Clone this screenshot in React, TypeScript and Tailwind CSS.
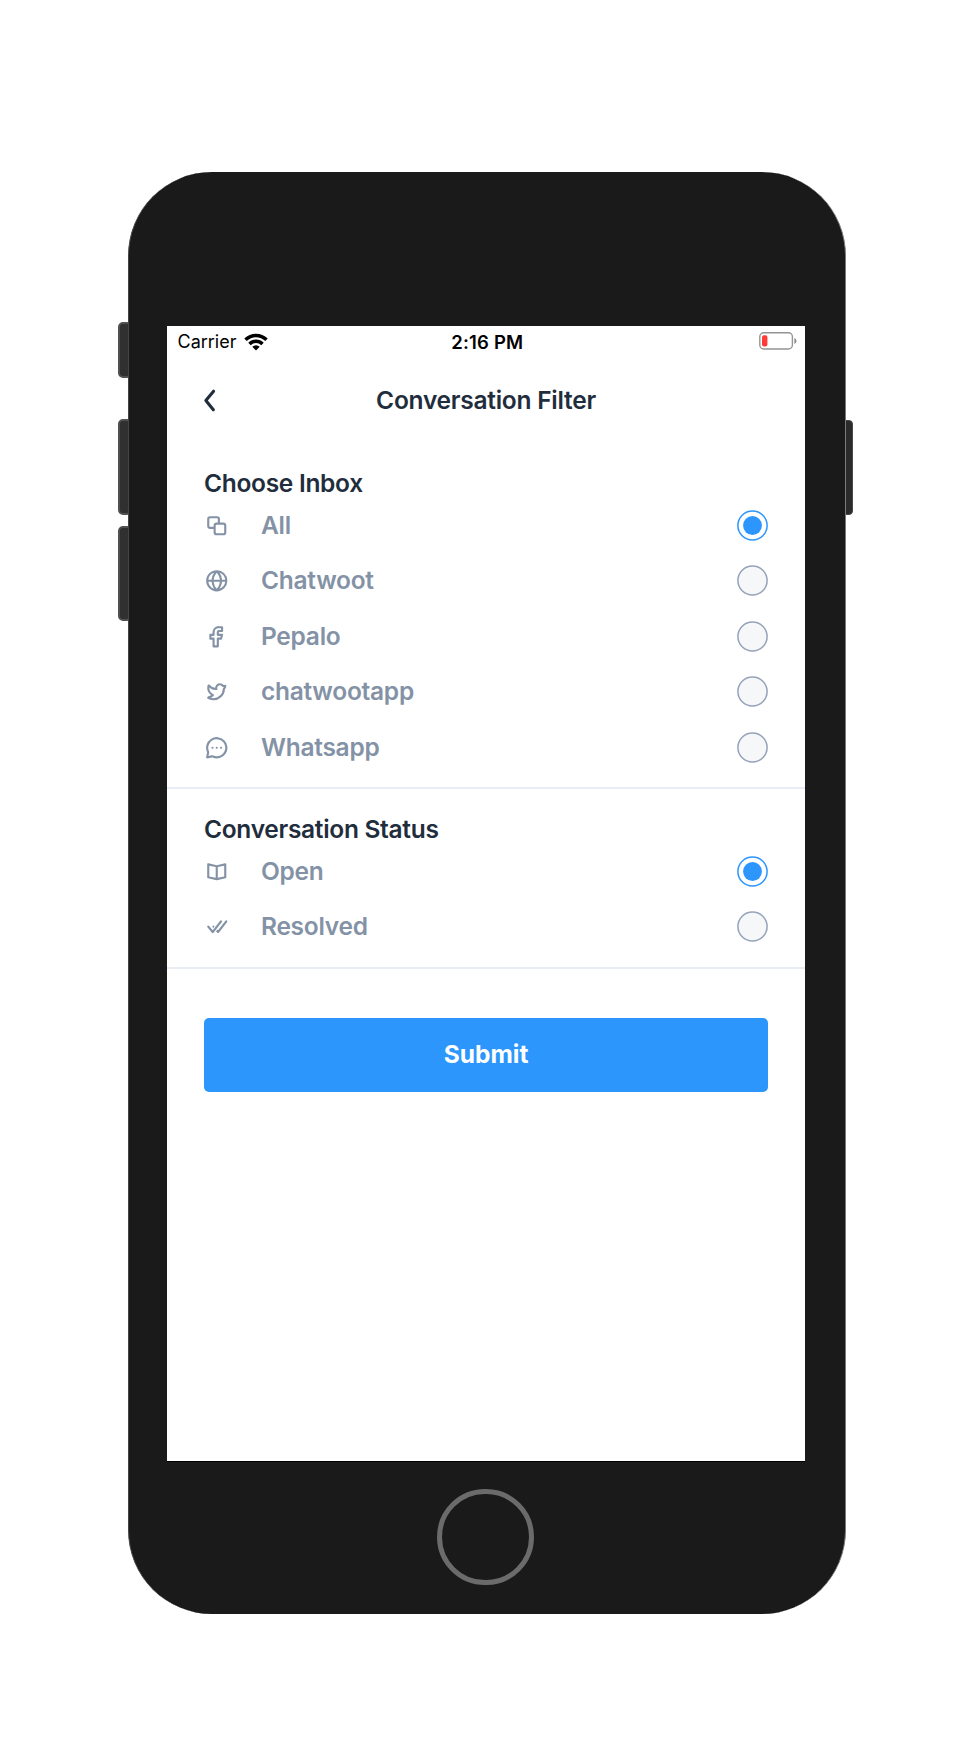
import type { ReactNode } from 'react';

const ICONS: Record<string, ReactNode> = {
  copy: (
    <>
      <path d="M18 21h-6a3 3 0 0 1-3-3v-6a3 3 0 0 1 3-3h6a3 3 0 0 1 3 3v6a3 3 0 0 1-3 3zm-6-10a1 1 0 0 0-1 1v6a1 1 0 0 0 1 1h6a1 1 0 0 0 1-1v-6a1 1 0 0 0-1-1z" />
      <path d="M9.73 15H5.67A2.68 2.68 0 0 1 3 12.33V5.67A2.68 2.68 0 0 1 5.67 3h6.66A2.68 2.68 0 0 1 15 5.67V9.4h-2V5.67a.67.67 0 0 0-.67-.67H5.67a.67.67 0 0 0-.67.67v6.66a.67.67 0 0 0 .67.67h4.06z" />
    </>
  ),
  globe: (
    <path d="M22 12A10 10 0 0 0 12 2a10 10 0 0 0 0 20 10 10 0 0 0 10-10zm-2.07-1H17a12.91 12.91 0 0 0-2.33-6.54A8 8 0 0 1 19.93 11zM9.08 13H15a11.44 11.44 0 0 1-3 6.61A11 11 0 0 1 9.08 13zm0-2A11.4 11.4 0 0 1 12 4.4a11.19 11.19 0 0 1 3 6.6zm.36-6.57A13.18 13.18 0 0 0 7.07 11h-3a8 8 0 0 1 5.37-6.57zM4.09 13h3a12.86 12.86 0 0 0 2.35 6.56A8 8 0 0 1 4.09 13zm10.55 6.55A13.14 13.14 0 0 0 17 13h2.95a8 8 0 0 1-5.31 6.55z" />
  ),
  facebook: (
    <path d="M13 22H9a1 1 0 0 1-1-1v-6.2H6a1 1 0 0 1-1-1v-3.6a1 1 0 0 1 1-1h2V7.5A5.77 5.77 0 0 1 14 2h3a1 1 0 0 1 1 1v3.6a1 1 0 0 1-1 1h-3v1.6h3a1 1 0 0 1 .8.39 1 1 0 0 1 .16.88l-1 3.6a1 1 0 0 1-1 .73H14V21a1 1 0 0 1-1 1zm-3-2h2v-6.2a1 1 0 0 1 1-1h2.24l.44-1.6H13a1 1 0 0 1-1-1V7.5a2 2 0 0 1 2-1.9h2V4h-2a3.78 3.78 0 0 0-4 3.5v2.7a1 1 0 0 1-1 1H7v1.6h2a1 1 0 0 1 1 1z" />
  ),
  twitter: (
    <path d="M8.51 20h-.08a10.87 10.87 0 0 1-4.65-1.09A1.38 1.38 0 0 1 3 17.47a1.41 1.41 0 0 1 1.16-1.18 6.63 6.63 0 0 0 2.54-.89 9.49 9.49 0 0 1-3.51-9.07 1.41 1.41 0 0 1 1-1.15 1.35 1.35 0 0 1 1.43.41 7.09 7.09 0 0 0 4.88 2.75 4.5 4.5 0 0 1 1.41-3.1 4.47 4.47 0 0 1 6.37.19.7.7 0 0 0 .78.1A1.39 1.39 0 0 1 21 7.13a6.66 6.66 0 0 1-1.28 2.6A10.79 10.79 0 0 1 8.51 20zm0-2h.08a8.79 8.79 0 0 0 9.09-8.59 1.32 1.32 0 0 1 .37-.85 5.19 5.19 0 0 0 .62-1 2.56 2.56 0 0 1-1.91-.85A2.45 2.45 0 0 0 15 6a2.5 2.5 0 0 0-1.79.69 2.53 2.53 0 0 0-.72 2.42l.26 1.14-1.17.08a8.3 8.3 0 0 1-6.54-2.4 7.12 7.12 0 0 0 3.73 6.46l.95.54-.63.9a5.62 5.62 0 0 1-2.68 1.92A8.34 8.34 0 0 0 8.5 18z" />
  ),
  message: (
    <>
      <circle cx="12" cy="12" r="1" />
      <circle cx="16" cy="12" r="1" />
      <circle cx="8" cy="12" r="1" />
      <path d="M19.07 4.93a10 10 0 0 0-16.28 11 1.06 1.06 0 0 1 .09.64L2 20.8a1 1 0 0 0 .27.91A1 1 0 0 0 3 22h.2l4.28-.86a1.26 1.26 0 0 1 .64.09 10 10 0 0 0 11-16.28zm.83 8.36a8 8 0 0 1-11 6.08 3.26 3.26 0 0 0-1.25-.26 3.43 3.43 0 0 0-.56.05l-2.82.57.57-2.82a3.09 3.09 0 0 0-.21-1.81 8 8 0 0 1 6.08-11 8 8 0 0 1 9.19 9.19z" />
    </>
  ),
  book: (
    <path d="M20.62 4.22a1 1 0 0 0-.84-.2L12 5.77 4.22 4A1 1 0 0 0 3 5v12.2a1 1 0 0 0 .78 1l8 1.8h.44l8-1.8a1 1 0 0 0 .78-1V5a1 1 0 0 0-.38-.78zM5 6.25l6 1.35v10.15L5 16.4zM19 16.4l-6 1.35V7.6l6-1.35z" />
  ),
  doneAll: (
    <>
      <path d="M16.62 6.21a1 1 0 0 0-1.41.17l-7 9-3.43-4.18a1 1 0 1 0-1.56 1.25l4.17 5.18a1 1 0 0 0 .78.37 1 1 0 0 0 .83-.38l7.83-10a1 1 0 0 0-.21-1.41z" />
      <path d="M21.62 6.21a1 1 0 0 0-1.41.17l-7 9-.61-.75-1.26 1.62 1.1 1.37a1 1 0 0 0 .78.37 1 1 0 0 0 .78-.38l7.83-10a1 1 0 0 0-.21-1.4z" />
      <path d="M8.71 13.06L10 11.44l-.2-.24a1 1 0 0 0-1.43-.2 1 1 0 0 0-.15 1.41z" />
    </>
  ),
};

function Radio({ checked }: { checked?: boolean }) {
  return (
    <svg viewBox="0 0 31 31" className="size-[31px] shrink-0" strokeWidth="1.5">
      {checked ? (
        <>
          <circle cx="15.5" cy="15.5" r="14.6" fill="#fff" stroke="#2c96fd" />
          <circle cx="15.5" cy="15.5" r="9.4" fill="#2c96fd" />
        </>
      ) : (
        <circle cx="15.5" cy="15.5" r="14.6" fill="#f5f7f9" stroke="#95a3bb" />
      )}
    </svg>
  );
}

type Item = { icon: string; label: string; checked?: boolean };

function Section({ title, items }: { title: string; items: Item[] }) {
  return (
    <section className="border-b-2 border-[#e8ecf5] px-[37px]">
      <h2 className="h-[29px] text-[24.5px] leading-[29px] font-semibold tracking-[-0.3px] text-[#1f2d3d]">{title}</h2>
      <ul className="pb-[12px]">
        {items.map((item) => (
          <li key={item.label} className="flex h-[55.5px] items-center">
            <svg viewBox="0 0 24 24" className="size-[25.5px] shrink-0 fill-[#8492a6]">
              {ICONS[item.icon]}
            </svg>
            <span className="ml-[31.5px] flex-1 text-[24.5px] leading-[29px] font-semibold tracking-[-0.27px] text-[#8492a6]">
              {item.label}
            </span>
            <Radio checked={item.checked} />
          </li>
        ))}
      </ul>
    </section>
  );
}

const INBOXES: Item[] = [
  { icon: 'copy', label: 'All', checked: true },
  { icon: 'globe', label: 'Chatwoot' },
  { icon: 'facebook', label: 'Pepalo' },
  { icon: 'twitter', label: 'chatwootapp' },
  { icon: 'message', label: 'Whatsapp' },
];

const STATUSES: Item[] = [
  { icon: 'book', label: 'Open', checked: true },
  { icon: 'doneAll', label: 'Resolved' },
];

function StatusBar() {
  return (
    <div className="grid h-[31px] grid-cols-3 items-center pr-[8px] pl-[10.5px] text-black">
      <div className="flex items-center gap-[7px]">
        <span className="text-[18px] leading-[22px]">Carrier</span>
        <svg viewBox="0 0 24 18" className="h-[18px] w-[24px]" fill="none" stroke="#000" strokeWidth="3.5">
          <path d="M1.5 6.7a15 15 0 0 1 21 0" />
          <path d="M5.5 10.9a9.3 9.3 0 0 1 13 0" />
          <path d="M8.3 13.8a5.3 5.3 0 0 1 7.4 0L12 17.6z" fill="#000" stroke="none" />
        </svg>
      </div>
      <span className="text-center text-[18.5px] leading-[22px] font-semibold tracking-[0.2px]">2:16 PM</span>
      <svg viewBox="0 0 38 18" className="-mt-px h-[18px] w-[38px] justify-self-end">
        <rect x="0.8" y="0.8" width="32.6" height="16.2" rx="4" fill="none" stroke="#949494" strokeWidth="1.4" />
        <rect x="3" y="3.2" width="5.4" height="11.4" rx="2" fill="#ff3b36" />
        <path d="M35.4 6a3.2 3.2 0 0 1 0 6z" fill="#8a8a8a" />
      </svg>
    </div>
  );
}

export default function App() {
  return (
    <div className="flex h-[1764px] w-[974px] flex-col bg-white pt-[172px] pl-[128px] font-['Inter',sans-serif]">
      <div className="relative h-[1442px] w-[718px]">
        <span className="absolute top-[150px] -left-[10px] h-[56px] w-[14px] rounded-[5px] border-2 border-[#505050] bg-[#303030]" />
        <span className="absolute top-[247px] -left-[10px] h-[96px] w-[14px] rounded-[5px] border-2 border-[#505050] bg-[#303030]" />
        <span className="absolute top-[354px] -left-[10px] h-[95px] w-[14px] rounded-[5px] border-2 border-[#505050] bg-[#303030]" />
        <span className="absolute top-[248px] -right-[7px] h-[95px] w-[14px] rounded-[4px] border border-[#484848] bg-[#2b2b2b]" />

        <div className="relative flex h-full flex-col items-center rounded-[84px] border-x border-r-[#7a7a7a] border-l-[#454545] bg-[#1a1a1a] pt-[154px]">
          <main className="mr-[2px] h-[1135px] w-[638px] shrink-0 bg-white">
            <StatusBar />
            <header className="relative flex h-[85px] items-center justify-center pt-px">
              <svg viewBox="0 0 24 24" className="absolute top-[24.5px] left-[25px] size-[37px] fill-[#1f2d3d]">
                <path d="M13.83 19a1 1 0 0 1-.78-.37l-4.83-6a1 1 0 0 1 0-1.27l5-6a1 1 0 0 1 1.54 1.28L10.29 12l4.32 5.36a1 1 0 0 1-.78 1.64z" />
              </svg>
              <h1 className="text-[24.5px] leading-[29px] font-semibold tracking-[-0.25px] text-[#1f2d3d]">
                Conversation Filter
              </h1>
            </header>
            <div className="pt-[26.5px]">
              <Section title="Choose Inbox" items={INBOXES} />
            </div>
            <div className="pt-[25.5px]">
              <Section title="Conversation Status" items={STATUSES} />
            </div>
            <div className="px-[37px] pt-[49px]">
              <button className="h-[74px] w-full rounded-[5px] bg-[#2c96fd] text-[24.5px] leading-[29px] font-bold text-white">
                Submit
              </button>
            </div>
          </main>
          <div className="mr-[2px] h-px w-[638px] shrink-0 bg-black" />
          <div className="mt-[27px] mr-[4px] h-[96px] w-[97px] shrink-0 rounded-full border-[5px] border-[#6b6b6b]" />
        </div>
      </div>
    </div>
  );
}
